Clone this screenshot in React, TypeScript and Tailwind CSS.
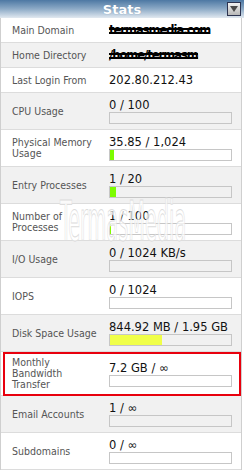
import React from "react";

type Row = {
  label: string;
  value: React.ReactNode;
  bar?: { pct: number; color: string };
  highlight?: boolean;
};

const GREEN = "#7cfc00";

const ROWS: Row[] = [
  { label: "Main Domain", value: <Scramble text="termasmedia.com" /> },
  { label: "Home Directory", value: <Scramble text="/home/termasm" /> },
  { label: "Last Login From", value: "202.80.212.43" },
  { label: "CPU Usage", value: "0 / 100", bar: { pct: 0, color: GREEN } },
  { label: "Physical Memory Usage", value: "35.85 / 1,024", bar: { pct: 3.5, color: GREEN } },
  { label: "Entry Processes", value: "1 / 20", bar: { pct: 5, color: GREEN } },
  { label: "Number of Processes", value: "1 / 100", bar: { pct: 1, color: GREEN } },
  { label: "I/O Usage", value: "0 / 1024 KB/s", bar: { pct: 0, color: GREEN } },
  { label: "IOPS", value: "0 / 1024", bar: { pct: 0, color: GREEN } },
  { label: "Disk Space Usage", value: "844.92 MB / 1.95 GB", bar: { pct: 43, color: "#f0ff48" } },
  { label: "Monthly Bandwidth Transfer", value: "7.2 GB / ∞", bar: { pct: 0, color: GREEN }, highlight: true },
  { label: "Email Accounts", value: "1 / ∞", bar: { pct: 0, color: GREEN } },
  { label: "Subdomains", value: "0 / ∞", bar: { pct: 0, color: GREEN } },
];

// censored text in the screenshot: heavy overprinted glyphs
function Scramble({ text }: { text: string }) {
  return (
    <span className="relative inline-block font-bold tracking-[-1px] text-black">
      {text}
      <span className="absolute left-0 right-0 top-[5px] h-[2px] bg-black" />
      <span className="absolute left-0 right-0 top-[9px] h-[2px] bg-black" />
    </span>
  );
}

export default function App() {
  return (
    <div className="relative w-[244px] h-[470px] overflow-hidden bg-white font-['DejaVu_Sans',sans-serif]">
      <div className="relative h-[18px] flex items-center justify-center bg-gradient-to-b from-[#4d78a3] via-[#8eabc7] to-[#e2e9f0]">
        <span className="text-white font-bold text-[13px] leading-none [text-shadow:0_0_1px_#6a8aaa]">Stats</span>
        <div className="absolute right-[3px] top-[2px] w-[14px] h-[14px] border border-[#2c3350] bg-gradient-to-b from-[#f2f2f2] to-[#b8b8b8] flex items-center justify-center">
          <svg width="8" height="6" viewBox="0 0 8 6">
            <path d="M0 0 H8 L4 6 Z" fill="#4a4a4a" />
          </svg>
        </div>
      </div>

      <div className="w-[242px] border-x border-[#cfcfcf]">
        {ROWS.map((r, i) => (
          <div
            key={r.label}
            className={`relative flex items-center py-[5px] border-b border-[#dcdcdc] ${
              i % 2 === 0 ? "bg-white" : "bg-[#f1f1f1]"
            }`}
          >
            <div className="w-[108px] shrink-0 pl-[11px] pr-[9px] text-[10.5px] leading-[11px] text-[#555] font-['DejaVu_Sans_Condensed','DejaVu_Sans',sans-serif]">
              {r.label}
            </div>
            <div className="flex flex-col">
              <div className="text-[11.5px] leading-[14px] text-[#111] whitespace-nowrap">{r.value}</div>
              {r.bar && (
                <div className="w-[123px] h-[12px] border border-[#c6c6c6]">
                  <div className="h-full" style={{ width: `${r.bar.pct}%`, backgroundColor: r.bar.color }} />
                </div>
              )}
            </div>
            {r.highlight && (
              <div className="absolute left-[2px] right-0 top-0 bottom-[-1px] border-2 border-[#e8000d]" />
            )}
          </div>
        ))}
        <div className="h-[10px] bg-[#f1f1f1]" />
      </div>

      {/* watermark */}
      <div className="absolute left-[60px] top-[194px] text-[55px] leading-none font-['DejaVu_Sans_Condensed','DejaVu_Sans',sans-serif] text-white/70 [-webkit-text-stroke:1px_#dcdcdc] scale-x-[0.39] origin-left pointer-events-none whitespace-nowrap">
        TermasMedia
      </div>
    </div>
  );
}
